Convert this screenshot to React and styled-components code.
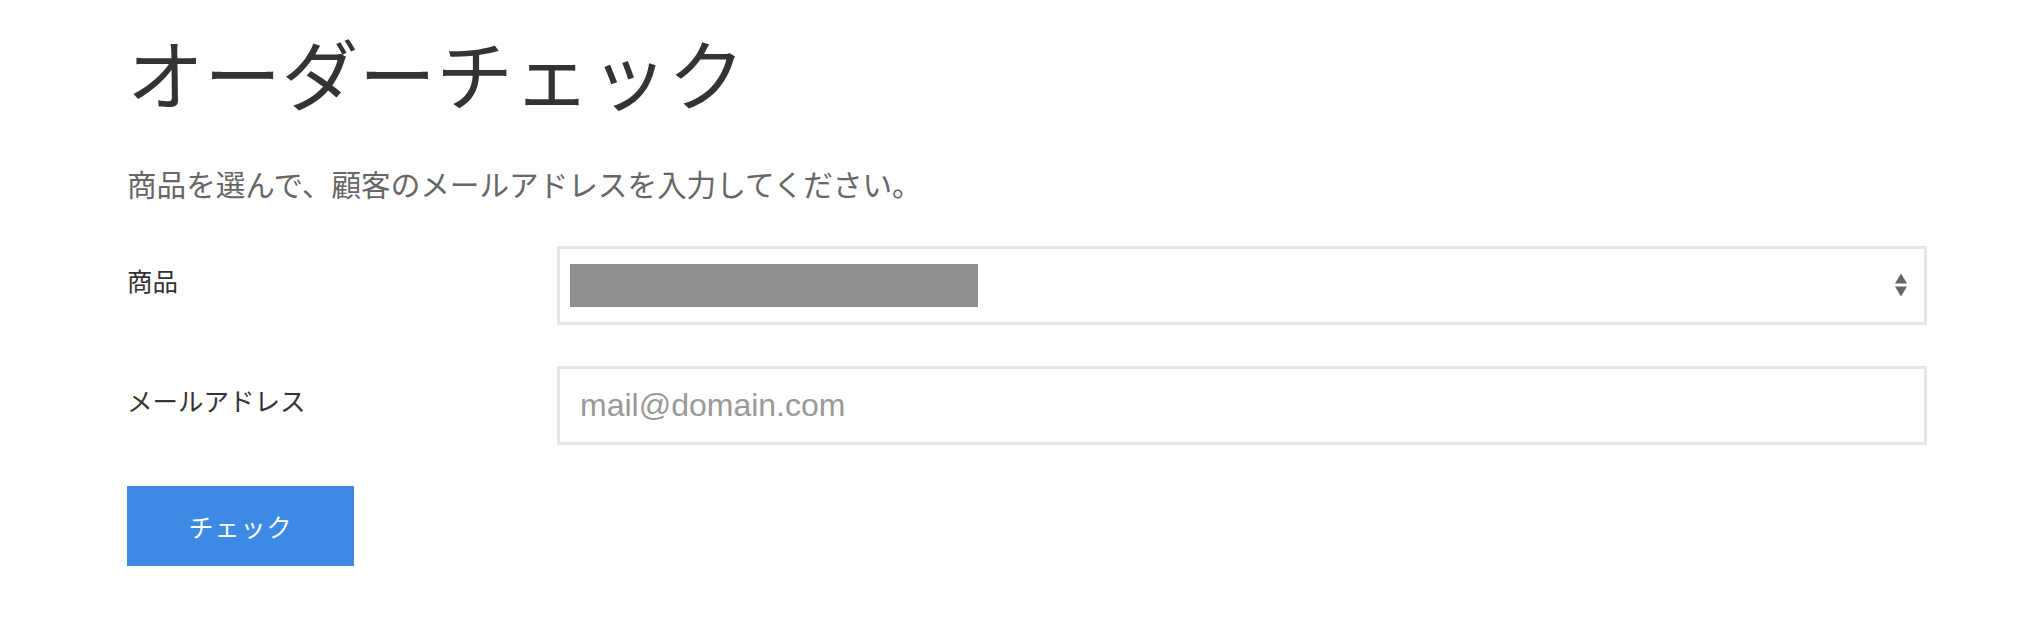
import React from "react";
import styled, { createGlobalStyle } from "styled-components";

const GlobalStyle = createGlobalStyle`
  body {
    margin: 0;
    background: #fff;
    font-family: "Noto Sans CJK JP", "Liberation Sans", sans-serif;
    color: #333;
  }
`;

const Page = styled.main`
  padding: 26px 95px 40px 127px;
`;

const Title = styled.h1`
  margin: 0;
  font-size: 76.8px;
  font-weight: 400;
  line-height: 1.2;
  color: #333;
  letter-spacing: 0.5px;
`;

const Lead = styled.p`
  margin: 47px 0 0;
  font-size: 29.6px;
  line-height: 1.3;
  color: #666;
`;

const Form = styled.form`
  margin-top: 42px;
  display: flex;
  flex-direction: column;
  gap: 41px;
`;

const Row = styled.div`
  display: grid;
  grid-template-columns: 430px 1fr;
  align-items: center;
`;

const Label = styled.label`
  padding-bottom: 12px;
  font-size: 25.5px;
  color: #333;
`;

const Field = styled.div`
  position: relative;
  height: 79px;
  border: 3px solid #e6e6e6;
  box-sizing: border-box;
  background: #fff;
  display: flex;
  align-items: center;
`;

const Redacted = styled.div`
  margin-left: 10px;
  width: 408px;
  height: 43px;
  background: #8f8f8f;
`;

const Arrows = styled.svg`
  position: absolute;
  right: 17px;
  top: 50%;
  transform: translateY(-50%);
`;

const Input = styled.input`
  width: 100%;
  height: 100%;
  border: none;
  outline: none;
  padding: 0 20px;
  box-sizing: border-box;
  font-family: "Liberation Sans", Arial, sans-serif;
  font-size: 32px;
  color: #333;
  background: transparent;

  &::placeholder {
    color: #999;
  }
`;

const Button = styled.button`
  width: 227px;
  height: 80px;
  border: none;
  border-radius: 0;
  background: #3d8ae6;
  color: #fff;
  font-family: "Noto Sans CJK JP", sans-serif;
  font-size: 25px;
  letter-spacing: 1px;
  cursor: pointer;
`;

export default function App() {
  return (
    <>
      <GlobalStyle />
      <Page>
        <Title>オーダーチェック</Title>
        <Lead>商品を選んで、顧客のメールアドレスを入力してください。</Lead>
        <Form onSubmit={(e) => e.preventDefault()}>
          <Row>
            <Label>商品</Label>
            <Field>
              <Redacted />
              <Arrows width="12" height="23" viewBox="0 0 12 23">
                <path d="M6 0 L12 10 L0 10 Z" fill="#666" />
                <path d="M0 13 L12 13 L6 23 Z" fill="#666" />
              </Arrows>
            </Field>
          </Row>
          <Row>
            <Label>メールアドレス</Label>
            <Field>
              <Input type="email" placeholder="mail@domain.com" />
            </Field>
          </Row>
          <div>
            <Button type="submit">チェック</Button>
          </div>
        </Form>
      </Page>
    </>
  );
}
